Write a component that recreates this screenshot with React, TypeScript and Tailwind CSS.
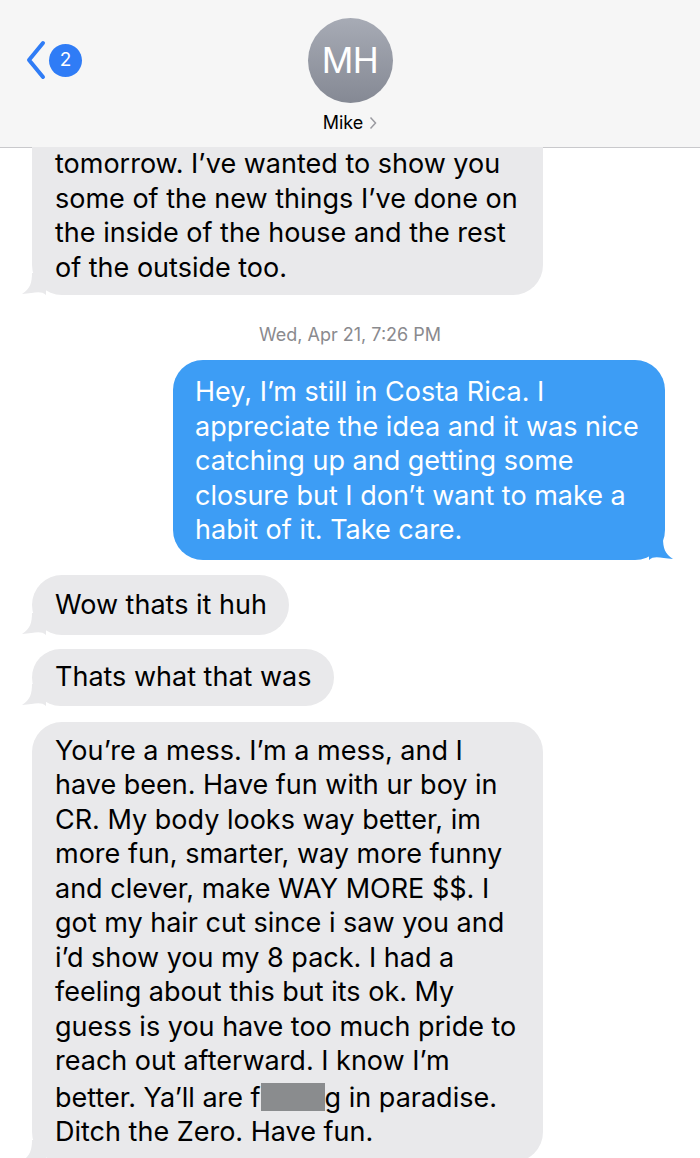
import React from "react";

const FONT = { fontFamily: "Inter, 'Liberation Sans', sans-serif" };

const GrayTail = () => (
  <svg
    className="absolute bottom-0 left-[-10px]"
    width="24"
    height="22"
    viewBox="0 0 24 22"
  >
    <path d="M10 0 L24 0 L24 22 C19 17 12 20 0 21 C8 16 10 10 10 0 Z" fill="#e9e9eb" />
  </svg>
);

const BlueTail = () => (
  <svg
    className="absolute bottom-0 right-[-8px]"
    width="24"
    height="22"
    viewBox="0 0 24 22"
  >
    <path d="M14 0 L0 0 L0 22 C5 17 12 20 24 21 C16 16 14 10 14 0 Z" fill="#3d9df5" />
  </svg>
);

const Lines = ({ lines }: { lines: string[] }) => (
  <>
    {lines.map((l, i) => (
      <div key={i} className="whitespace-nowrap">
        {l}
      </div>
    ))}
  </>
);

export default function App() {
  return (
    <div className="relative h-[1158px] w-[700px] overflow-hidden bg-white" style={FONT}>
      {/* header */}
      <div className="relative h-[148px] border-b border-[#c9c9cc] bg-[#f6f6f6]">
        <div className="absolute left-[23px] top-[40px] flex items-center">
          <svg width="24" height="40" viewBox="0 0 24 40">
            <path
              d="M20 3 L6 20 L20 37"
              fill="none"
              stroke="#2f7cf6"
              strokeWidth="4"
              strokeLinecap="round"
              strokeLinejoin="round"
            />
          </svg>
          <div className="ml-[2px] flex h-[33px] w-[33px] items-center justify-center rounded-full bg-[#2f7cf6] text-[19px] text-white">
            2
          </div>
        </div>
        <div className="flex flex-col items-center pt-[18px]">
          <div className="flex h-[85px] w-[85px] items-center justify-center rounded-full bg-gradient-to-b from-[#a7abb5] to-[#858994] text-[35px] tracking-[-0.5px] text-white">
            MH
          </div>
          <div className="mt-[6px] flex items-center gap-[6px] text-[18px] text-black">
            Mike
            <svg width="8" height="14" viewBox="0 0 8 14">
              <path d="M1.5 1.5 L6.5 7 L1.5 12.5" fill="none" stroke="#9a9aa0" strokeWidth="1.5" />
            </svg>
          </div>
        </div>
      </div>

      <div className="flex flex-col text-[27px] leading-[34.5px]">
        {/* first bubble, top cut off by header */}
        <div className="ml-[32px] mt-[-1px] w-[511px]">
          <div className="relative rounded-b-[30px] bg-[#e9e9eb] pb-[10px] pl-[23px] pt-0 text-black">
            <Lines
              lines={[
                "tomorrow. I\u2019ve wanted to show you",
                "some of the new things I\u2019ve done on",
                "the inside of the house and the rest",
                "of the outside too.",
              ]}
            />
            <GrayTail />
          </div>
        </div>

        <div className="mt-[29px] text-center text-[18px] leading-[22px] text-[#8a8a8e]">
          Wed, Apr 21, 7:26 PM
        </div>

        <div className="mr-[35px] mt-[14px] flex justify-end">
          <div className="relative w-[492px] rounded-[30px] bg-[#3d9df5] pb-[12px] pl-[22px] pt-[15px] text-white">
            <Lines
              lines={[
                "Hey, I\u2019m still in Costa Rica. I",
                "appreciate the idea and it was nice",
                "catching up and getting some",
                "closure but I don\u2019t want to make a",
                "habit of it. Take care.",
              ]}
            />
            <BlueTail />
          </div>
        </div>

        <div className="ml-[32px] mt-[15px] flex">
          <div className="relative rounded-[30px] bg-[#e9e9eb] py-[13px] pl-[23px] pr-[22px] text-black">
            Wow thats it huh
            <GrayTail />
          </div>
        </div>

        <div className="ml-[32px] mt-[14px] flex">
          <div className="relative rounded-[30px] bg-[#e9e9eb] py-[11px] pl-[23px] pr-[22px] text-black">
            Thats what that was
            <GrayTail />
          </div>
        </div>

        <div className="ml-[32px] mt-[16px] w-[511px]">
          <div className="relative rounded-[30px] bg-[#e9e9eb] pb-[12px] pl-[23px] pt-[12px] text-black">
            <Lines
              lines={[
                "You\u2019re a mess. I\u2019m a mess, and I",
                "have been. Have fun with ur boy in",
                "CR. My body looks way better, im",
                "more fun, smarter, way more funny",
                "and clever, make WAY MORE $$. I",
                "got my hair cut since i saw you and",
                "i\u2019d show you my 8 pack. I had a",
                "feeling about this but its ok. My",
                "guess is you have too much pride to",
                "reach out afterward. I know I\u2019m",
              ]}
            />
            <div className="whitespace-nowrap">
              better. Ya{"\u2019"}ll are f
              <span className="inline-block h-[28px] w-[64px] translate-y-[4px] bg-[#8a8c8e]" />
              g in paradise.
            </div>
            <div className="whitespace-nowrap">Ditch the Zero. Have fun.</div>
            <GrayTail />
          </div>
        </div>
      </div>
    </div>
  );
}
